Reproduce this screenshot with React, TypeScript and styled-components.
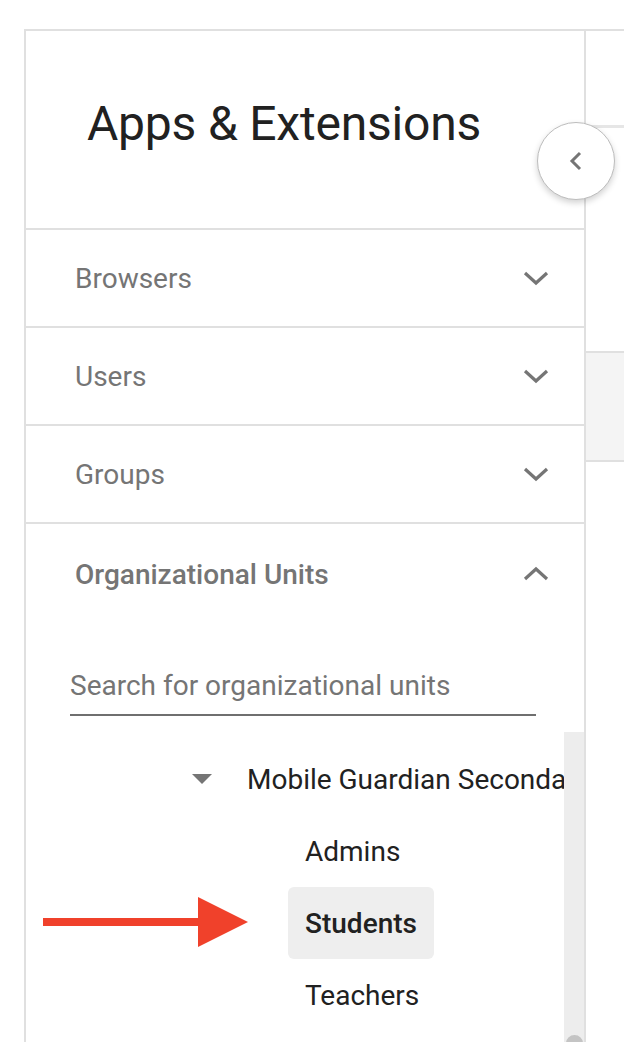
import React from "react";
import styled, { createGlobalStyle } from "styled-components";

const GlobalStyle = createGlobalStyle`
  html, body {
    margin: 0;
    padding: 0;
    background: #ffffff;
    overflow: hidden;
    font-family: Roboto, "Liberation Sans", Arial, sans-serif;
  }
  * { box-sizing: border-box; }
`;

const Page = styled.div`
  position: relative;
  display: flex;
  align-items: flex-start;
  padding: 29px 0 0 24px;
  width: 624px;
  height: 1042px;
  overflow: hidden;
`;

const Sidebar = styled.aside`
  width: 562px;
  flex: none;
  border: 2px solid #e0e0e0;
  border-bottom: none;
  display: flex;
  flex-direction: column;
  background: #fff;
`;

const Header = styled.div`
  flex: none;
  height: 199px;
  padding: 65px 0 0 61px;
  border-bottom: 2px solid #e0e0e0;
`;

const Title = styled.h1`
  margin: 0;
  font-size: 48px;
  font-weight: 400;
  color: #212121;
  line-height: 56px;
  letter-spacing: -0.2px;
`;

const AccordionRow = styled.div<{ $open?: boolean }>`
  height: ${(p) => (p.$open ? "100px" : "98px")};
  display: flex;
  align-items: center;
  justify-content: space-between;
  padding: 0 35px 0 49px;
  border-bottom: ${(p) => (p.$open ? "none" : "2px solid #e0e0e0")};
  flex: none;
`;

const RowLabel = styled.span<{ $bold?: boolean }>`
  font-size: 28px;
  color: #757575;
  font-weight: ${(p) => (p.$bold ? 500 : 400)};
`;

const SearchField = styled.div`
  flex: none;
  margin: 41px 48px 0 44px;
  height: 51px;
  padding-bottom: 8px;
  border-bottom: 2px solid #6f6f6f;
  display: flex;
  align-items: center;
`;

const SearchInput = styled.input`
  border: none;
  outline: none;
  padding: 0;
  width: 100%;
  height: 40px;
  font-family: Roboto, "Liberation Sans", Arial, sans-serif;
  font-size: 28px;
  color: #212121;
  background: transparent;
  &::placeholder {
    color: #757575;
    opacity: 1;
  }
`;

const TreeArea = styled.div`
  margin-top: 16px;
  display: flex;
  height: 360px;
  flex: none;
`;

const TreeContent = styled.div`
  flex: 1;
  min-width: 0;
  overflow: hidden;
  padding-top: 11px;
  display: flex;
  flex-direction: column;
`;

const ParentRow = styled.div`
  height: 72px;
  display: flex;
  align-items: center;
  padding-left: 166px;
  white-space: nowrap;
`;

const Caret = styled.svg`
  width: 20px;
  height: 10px;
  flex: none;
  margin-right: 35px;
`;

const NodeText = styled.span<{ $bold?: boolean }>`
  font-size: 28px;
  color: #212121;
  font-weight: ${(p) => (p.$bold ? 500 : 400)};
`;

const LeafRow = styled.div`
  height: 72px;
  display: flex;
  align-items: center;
  padding-left: 262px;
`;

const LeafBox = styled.div<{ $selected?: boolean }>`
  height: 72px;
  display: flex;
  align-items: center;
  padding: 0 17px;
  border-radius: 6px;
  background: ${(p) => (p.$selected ? "#eeeeee" : "transparent")};
`;

const ScrollTrack = styled.div`
  width: 20px;
  flex: none;
  background: #ededed;
  display: flex;
  flex-direction: column;
  align-items: center;
`;

const ScrollThumb = styled.div`
  margin-top: 303px;
  width: 17px;
  height: 60px;
  border-radius: 9px;
  background: #c4c4c4;
`;

const RightPane = styled.div`
  flex: 1;
  border-top: 2px solid #e0e0e0;
  display: flex;
  flex-direction: column;
`;

const PaneHeader = styled.div`
  height: 97px;
  border-bottom: 3px solid #e6e6e6;
  flex: none;
`;

const PaneBox = styled.div`
  margin-top: 223px;
  height: 111px;
  background: #f4f4f4;
  border-top: 2px solid #e0e0e0;
  border-bottom: 2px solid #e0e0e0;
  flex: none;
`;

const CollapseButton = styled.button`
  position: absolute;
  left: 537px;
  top: 122px;
  width: 78px;
  height: 78px;
  border-radius: 50%;
  background: #fff;
  border: 1.5px solid #bdbdbd;
  box-shadow: 0 3px 6px rgba(0, 0, 0, 0.18);
  display: flex;
  align-items: center;
  justify-content: center;
  padding: 0;
  cursor: pointer;
`;

const ArrowMark = styled.svg`
  position: absolute;
  left: 40px;
  top: 895px;
  width: 212px;
  height: 54px;
`;

const Chevron = ({ up }: { up?: boolean }) => (
  <svg width="26" height="16" viewBox="0 0 26 16">
    <polyline
      points={up ? "2,13 13,3 24,13" : "2,3 13,13 24,3"}
      fill="none"
      stroke="#757575"
      strokeWidth="3.2"
    />
  </svg>
);

const sections = ["Browsers", "Users", "Groups"];

export default function App() {
  return (
    <>
      <GlobalStyle />
      <Page>
        <Sidebar>
          <Header>
            <Title>Apps &amp; Extensions</Title>
          </Header>
          {sections.map((s) => (
            <AccordionRow key={s}>
              <RowLabel>{s}</RowLabel>
              <Chevron />
            </AccordionRow>
          ))}
          <AccordionRow $open>
            <RowLabel $bold>Organizational Units</RowLabel>
            <Chevron up />
          </AccordionRow>
          <SearchField>
            <SearchInput placeholder="Search for organizational units" />
          </SearchField>
          <TreeArea>
            <TreeContent>
              <ParentRow>
                <Caret viewBox="0 0 20 10">
                  <polygon points="0,0 20,0 10,10" fill="#757575" />
                </Caret>
                <NodeText>Mobile Guardian Secondary School</NodeText>
              </ParentRow>
              <LeafRow>
                <LeafBox>
                  <NodeText>Admins</NodeText>
                </LeafBox>
              </LeafRow>
              <LeafRow>
                <LeafBox $selected>
                  <NodeText $bold>Students</NodeText>
                </LeafBox>
              </LeafRow>
              <LeafRow>
                <LeafBox>
                  <NodeText>Teachers</NodeText>
                </LeafBox>
              </LeafRow>
            </TreeContent>
            <ScrollTrack>
              <ScrollThumb />
            </ScrollTrack>
          </TreeArea>
        </Sidebar>
        <RightPane>
          <PaneHeader />
          <PaneBox />
        </RightPane>
        <CollapseButton aria-label="Collapse">
          <svg width="14" height="20" viewBox="0 0 14 20">
            <polyline points="11,2 3,10 11,18" fill="none" stroke="#757575" strokeWidth="3" />
          </svg>
        </CollapseButton>
        <ArrowMark viewBox="0 0 212 54">
          <rect x="3" y="23" width="160" height="8" fill="#f0412b" />
          <polygon points="158,2 208,27 158,52" fill="#f0412b" />
        </ArrowMark>
      </Page>
    </>
  );
}
